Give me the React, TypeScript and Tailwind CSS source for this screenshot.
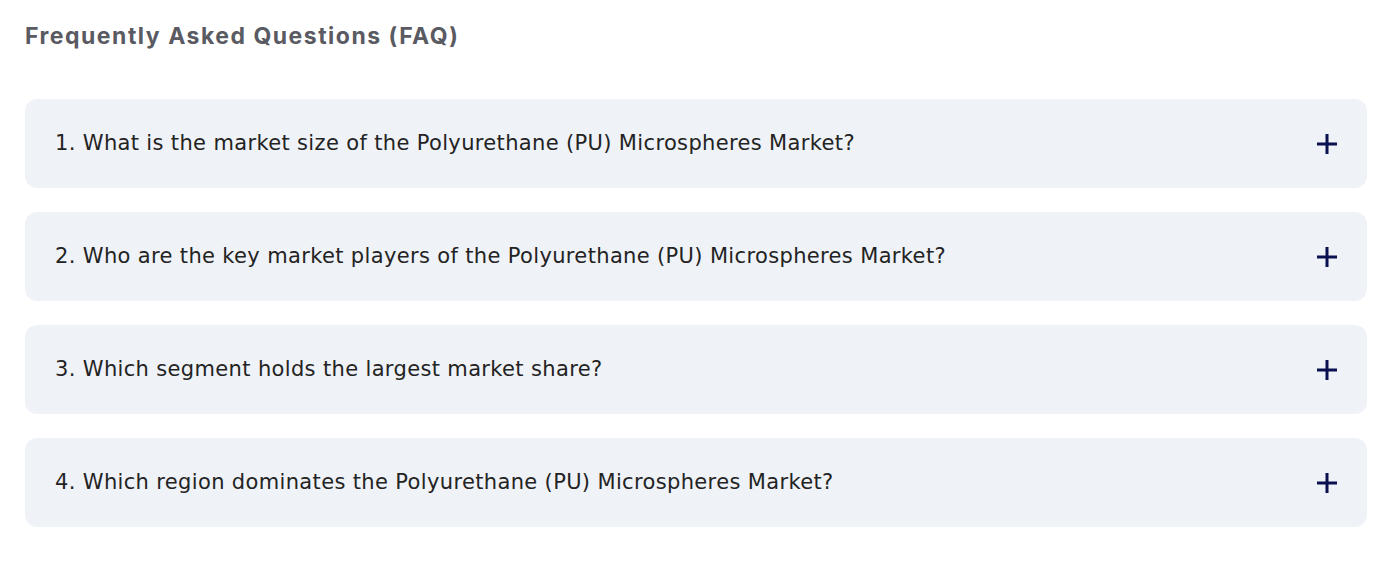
// FAQ section — accordion-style list of questions

import { useState } from 'react';

const questions = [
    '1. What is the market size of the Polyurethane (PU) Microspheres Market?',
    '2. Who are the key market players of the Polyurethane (PU) Microspheres Market?',
    '3. Which segment holds the largest market share?',
    '4. Which region dominates the Polyurethane (PU) Microspheres Market?',
];

function PlusIcon() {
    return (
        <svg width="22" height="22" viewBox="0 0 22 22" aria-hidden="true">
            <path d="M11 1v20M1 11h20" stroke="#0b1050" strokeWidth="3" fill="none" />
        </svg>
    );
}

export default function App() {
    const [open, setOpen] = useState<number | null>(null);

    return (
        <div className="w-[1396px] h-[562px] bg-white pl-[25px] pr-[29px] pt-[20px]">
            <h2 className="text-[23px] font-bold text-[#5a5a62] leading-[32px] tracking-[1.5px]" style={{ fontFamily: 'Inter, sans-serif' }}>
                Frequently Asked Questions (FAQ)
            </h2>

            <div className="mt-[47px] flex flex-col gap-[24px]">
                {questions.map((q, i) => (
                    <button
                        key={i}
                        type="button"
                        onClick={() => setOpen(open === i ? null : i)}
                        className="h-[89px] w-full flex items-center justify-between rounded-[12px] bg-[#eff2f7] pl-[30px] pr-[29px] pt-[1px] text-left"
                    >
                        <span className="text-[21px] tracking-[0.35px] text-[#232323]" style={{ fontFamily: '"DejaVu Sans", sans-serif' }}>
                            {q}
                        </span>
                        <PlusIcon />
                    </button>
                ))}
            </div>
        </div>
    );
}
